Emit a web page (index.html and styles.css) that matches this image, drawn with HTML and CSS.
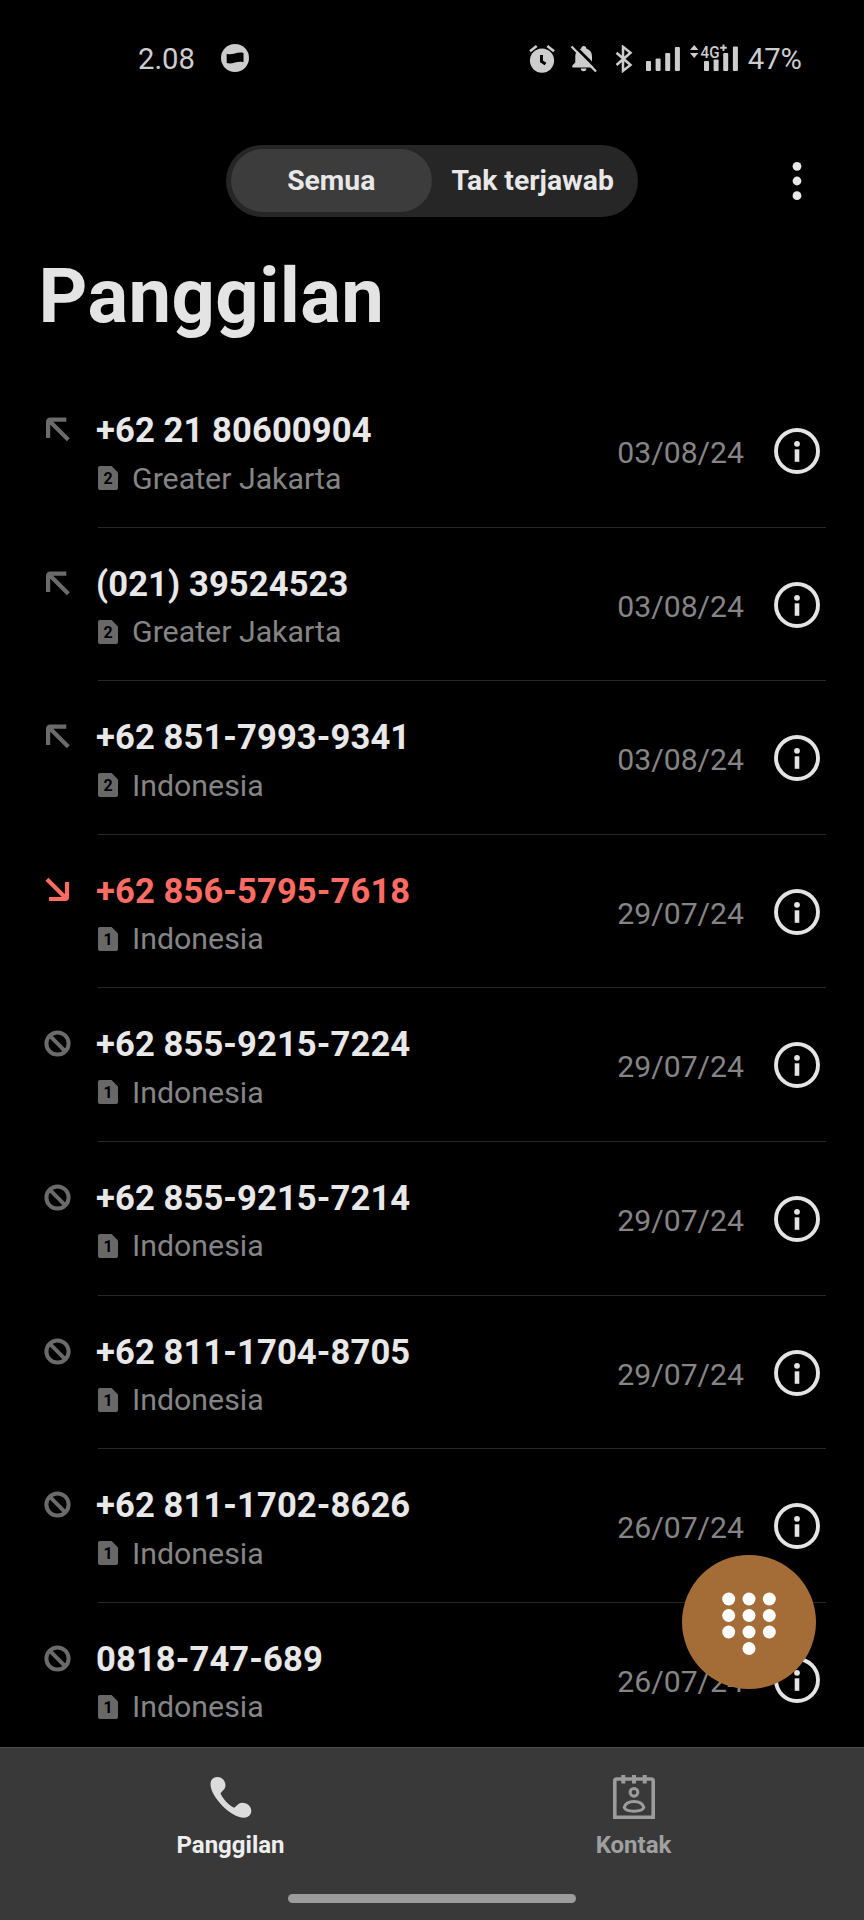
FILE: index.html
```html
<!DOCTYPE html>
<html lang="id">
<head>
<meta charset="utf-8">
<title>Panggilan</title>
<link rel="stylesheet" href="styles.css">
</head>
<body>
<svg class="defs" aria-hidden="true">
  <symbol id="out" viewBox="0 0 28 28"><path d="M4.100 22V5.600a2 2 0 0 1 2-2H22.300M4.500 4L24.300 23.800" fill="none" stroke="currentColor" stroke-width="4.200"/></symbol>
  <symbol id="missed" viewBox="0 0 28 28"><path d="M3 2.200L22 21.200M23 5v15a2 2 0 0 1-2 2H5" fill="none" stroke="currentColor" stroke-width="4.200"/></symbol>
  <symbol id="blocked" viewBox="0 0 28 28"><circle cx="13.500" cy="13.500" r="11.100" fill="none" stroke="currentColor" stroke-width="4"/><path d="M5.700 5.700l15.600 15.600" stroke="currentColor" stroke-width="3.900"/></symbol>
  <symbol id="sim" viewBox="0 0 20 24"><path d="M2 0h11.600L20 6.400V22a2 2 0 0 1-2 2H2a2 2 0 0 1-2-2V2a2 2 0 0 1 2-2z" fill="currentColor"/></symbol>
  <symbol id="info" viewBox="0 0 46 46"><circle cx="23" cy="23" r="21" fill="none" stroke="currentColor" stroke-width="3.900"/><circle cx="23" cy="15.800" r="2.900" fill="currentColor"/><path d="M20.700 21.300h4.600v12.500h-4.600z" fill="currentColor"/></symbol>
</svg>
<div class="phone">
  <header class="status">
    <div class="clock">2.08</div>
    <svg class="notice" width="28" height="28" viewBox="0 0 28 28"><circle cx="14" cy="14" r="14" fill="#cdcdcd"/><path d="M5.700 9.800c5.500 2 10-2.500 16.800-.9v9.300c-6.600-1.600-11 2.800-16.800.9z" fill="#000"/></svg>
    <div class="indicators">
      <svg width="26" height="28" viewBox="0 0 26 28"><circle cx="13" cy="15.600" r="12.100" fill="#cdcdcd"/><path d="M1 6.300L7.700 1M25 6.300L18.300 1" stroke="#cdcdcd" stroke-width="2.600"/><path d="M12.500 10v6.400l4 2.700" fill="none" stroke="#000" stroke-width="3"/></svg>
      <svg class="bell" width="28" height="28" viewBox="0 0 28 28"><path d="M11.300 3.500a2.500 2.500 0 0 1 5 0c3.800 1.200 5.700 4.200 5.700 8v6l3 3v2H2.300v-2l3-3v-6c0-3.800 2.200-6.800 6-8zM10.800 23.500h5.600a2.800 2.800 0 0 1-5.600 0z" fill="#cdcdcd"/><path d="M3.500 0L28 24.500" stroke="#000" stroke-width="3"/><path d="M1.500 1.500L26 26.500" stroke="#cdcdcd" stroke-width="2.300"/></svg>
      <svg class="bt" width="18" height="28" viewBox="0 0 18 28"><path d="M1.500 7.700L15.500 20 8 25.800V1.800L15.500 7.700 1.500 20" fill="none" stroke="#cdcdcd" stroke-width="2.500"/></svg>
      <svg class="bars" width="35" height="28" viewBox="0 0 35 28"><g fill="#cdcdcd"><rect y="16" width="5" height="10" rx="1"/><rect x="9.600" y="13.500" width="5" height="12.500" rx="1"/><rect x="19.200" y="8" width="5" height="18" rx="1"/><rect x="28.900" y="2" width="5" height="24" rx="1"/></g></svg>
      <svg class="data" width="50" height="38" viewBox="0 -4 50 38"><g fill="#cdcdcd"><path d="M0 6L4.200 1l4.200 5zM0 9l4.200 5 4.200-5z"/><rect x="14" y="17" width="5" height="10" rx="1"/><rect x="23.600" y="15.500" width="5" height="11.500" rx="1"/><rect x="33.200" y="9" width="5" height="18" rx="1"/><rect x="42.900" y="2.500" width="5" height="24.500" rx="1"/><text x="10.500" y="13.800" class="net" textLength="19" lengthAdjust="spacingAndGlyphs">4G</text><path d="M30.200 3.800h6.600M33.500 .5v6.600" stroke="#cdcdcd" stroke-width="1.900"/></g></svg>
      <div class="battery">47%</div>
    </div>
  </header>
  <div class="toolbar">
    <div class="tabs"><div class="tab active">Semua</div><div class="tab">Tak terjawab</div></div>
    <svg class="more" width="10" height="40" viewBox="0 0 10 40"><g fill="#e8e8e8"><circle cx="5" cy="5.300" r="4.400"/><circle cx="5" cy="20" r="4.400"/><circle cx="5" cy="34.700" r="4.400"/></g></svg>
  </div>
  <h1 class="title">Panggilan</h1>
  <main class="calls">
    <div class="call"><svg class="kind"><use href="#out"/></svg><div class="body"><div class="who"><div class="number">+62 21 80600904</div><div class="place"><span class="sim"><svg><use href="#sim"/></svg><b>2</b></span>Greater Jakarta</div></div><div class="date">03/08/24</div><svg class="info"><use href="#info"/></svg></div></div>
    <div class="call"><svg class="kind"><use href="#out"/></svg><div class="body"><div class="who"><div class="number">(021) 39524523</div><div class="place"><span class="sim"><svg><use href="#sim"/></svg><b>2</b></span>Greater Jakarta</div></div><div class="date">03/08/24</div><svg class="info"><use href="#info"/></svg></div></div>
    <div class="call"><svg class="kind"><use href="#out"/></svg><div class="body"><div class="who"><div class="number">+62 851-7993-9341</div><div class="place"><span class="sim"><svg><use href="#sim"/></svg><b>2</b></span>Indonesia</div></div><div class="date">03/08/24</div><svg class="info"><use href="#info"/></svg></div></div>
    <div class="call missed"><svg class="kind"><use href="#missed"/></svg><div class="body"><div class="who"><div class="number">+62 856-5795-7618</div><div class="place"><span class="sim"><svg><use href="#sim"/></svg><b>1</b></span>Indonesia</div></div><div class="date">29/07/24</div><svg class="info"><use href="#info"/></svg></div></div>
    <div class="call"><svg class="kind"><use href="#blocked"/></svg><div class="body"><div class="who"><div class="number">+62 855-9215-7224</div><div class="place"><span class="sim"><svg><use href="#sim"/></svg><b>1</b></span>Indonesia</div></div><div class="date">29/07/24</div><svg class="info"><use href="#info"/></svg></div></div>
    <div class="call"><svg class="kind"><use href="#blocked"/></svg><div class="body"><div class="who"><div class="number">+62 855-9215-7214</div><div class="place"><span class="sim"><svg><use href="#sim"/></svg><b>1</b></span>Indonesia</div></div><div class="date">29/07/24</div><svg class="info"><use href="#info"/></svg></div></div>
    <div class="call"><svg class="kind"><use href="#blocked"/></svg><div class="body"><div class="who"><div class="number">+62 811-1704-8705</div><div class="place"><span class="sim"><svg><use href="#sim"/></svg><b>1</b></span>Indonesia</div></div><div class="date">29/07/24</div><svg class="info"><use href="#info"/></svg></div></div>
    <div class="call"><svg class="kind"><use href="#blocked"/></svg><div class="body"><div class="who"><div class="number">+62 811-1702-8626</div><div class="place"><span class="sim"><svg><use href="#sim"/></svg><b>1</b></span>Indonesia</div></div><div class="date">26/07/24</div><svg class="info"><use href="#info"/></svg></div></div>
    <div class="call"><svg class="kind"><use href="#blocked"/></svg><div class="body"><div class="who"><div class="number">0818-747-689</div><div class="place"><span class="sim"><svg><use href="#sim"/></svg><b>1</b></span>Indonesia</div></div><div class="date">26/07/24</div><svg class="info"><use href="#info"/></svg></div></div>
  </main>
  <div class="dial">
    <svg width="54" height="64" viewBox="0 0 54 64"><g fill="#fff"><circle cx="6.700" cy="7" r="6.500"/><circle cx="27" cy="7" r="6.500"/><circle cx="47.300" cy="7" r="6.500"/><circle cx="6.700" cy="23.500" r="6.500"/><circle cx="27" cy="23.500" r="6.500"/><circle cx="47.300" cy="23.500" r="6.500"/><circle cx="6.700" cy="40" r="6.500"/><circle cx="27" cy="40" r="6.500"/><circle cx="47.300" cy="40" r="6.500"/><circle cx="27" cy="56.500" r="6.500"/></g></svg>
  </div>
  <footer class="nav">
    <div class="navitems">
      <div class="navitem on"><svg width="44" height="46" viewBox="0 0 44 46"><path d="M1.500 10C1.500 5.500 4.500 3 8.500 3c4.500 0 8 4 8 8.500 0 3.500-3.500 5.500-5 8C14 25 19 30.500 25 33.800c2.500-1 4-5 8-5 5 0 9.300 3.500 9.300 8 0 4-3 7-7.500 7C22 43.500 1.500 23 1.500 10z" fill="#dcdcdc"/></svg><span>Panggilan</span></div>
      <div class="navitem"><svg width="44" height="46" viewBox="0 0 44 46"><g fill="none" stroke="#9c9c9c" stroke-width="3.600"><path d="M2.800 43.200V7a2 2 0 0 1 2-2h34.400a2 2 0 0 1 2 2v36.200z"/><path d="M11.300 1v8.500M22 1v8.500M32.700 1v8.500" stroke-width="4"/><circle cx="22" cy="18.300" r="3.900" stroke-width="3"/><path d="M12.200 33.500c1.300-4.500 5.500-6 9.800-6s8.500 1.500 9.800 6c-1 2.500-5.500 3.700-9.800 3.700s-8.800-1.200-9.800-3.700z" stroke-width="3"/></g></svg><span>Kontak</span></div>
    </div>
    <div class="home"></div>
  </footer>
</div>
</body>
</html>
```
FILE: styles.css
```css
* { box-sizing: border-box; }
body { margin: 0; background: #000; font-family: Roboto, sans-serif; }
svg { display: block; flex: none; }
.defs { position: absolute; width: 0; height: 0; }
.phone { position: relative; width: 864px; height: 1920px; overflow: hidden; display: flex; flex-direction: column; color: #e8e8e8; }

.status { height: 117px; flex: none; display: flex; align-items: center; padding: 0 62px 0 138px; color: #cdcdcd; font-size: 29.200px; line-height: 36px; }
.notice { margin-left: 26px; margin-top: -2px; }
.indicators { margin-left: auto; display: flex; align-items: center; }
.bell { margin-left: 15.500px; }
.bt { margin-left: 16.500px; }
.bars { margin-left: 13px; }
.data { margin-left: 9px; }
.net { font-size: 17px; font-weight: 500; }
.battery { margin-left: 8px; }

.toolbar { height: 128px; flex: none; display: flex; align-items: center; padding: 0 62px 1px 226px; }
.tabs { width: 412px; height: 72px; border-radius: 36px; background: #262626; padding: 4.500px; display: flex; }
.tab { flex: 1; text-align: center; font-size: 28.300px; font-weight: 700; line-height: 63px; border-radius: 32px; white-space: nowrap; }
.tab.active { background: #3c3c3c; }
.more { margin-left: auto; }

.title { margin: 0 0 0 38.500px; padding-top: 1px; font-size: 76px; font-weight: 700; letter-spacing: .4px; line-height: 100px; height: 129px; flex: none; color: #e4e4e4; }

.calls { flex: 1; min-height: 0; overflow: hidden; }
.call { height: 153.600px; display: flex; padding: 0 38.500px 0 44px; }
.kind { width: 28px; height: 28px; margin-top: 42px; color: #6b6b6b; }
.body { flex: 1; margin-left: 26px; border-bottom: 1.500px solid #262626; display: flex; align-items: flex-start; }
.number { margin-top: 35px; font-size: 34.600px; font-weight: 700; letter-spacing: .1px; line-height: 42px; margin-left: -2px; }
.place { display: flex; align-items: center; margin-top: 8.500px; font-size: 30.300px; line-height: 38px; color: #858585; }
.sim { position: relative; width: 20px; height: 24px; margin-right: 14px; margin-top: -1px; color: #686868; }
.sim svg { width: 20px; height: 24px; }
.sim b { position: absolute; inset: 0; color: #000; font-size: 16px; font-weight: 700; line-height: 25px; text-align: center; }
.date { margin-left: auto; margin-top: 60px; font-size: 30.200px; line-height: 38px; color: #858585; }
.info { width: 46px; height: 46px; margin: 54px 5.500px 0 30px; color: #e4e4e4; }
.missed .kind, .missed .number { color: #ff6c63; }

.dial { position: absolute; left: 682px; top: 1555px; width: 134px; height: 134px; border-radius: 50%; background: #a46d37; display: flex; justify-content: center; padding-top: 36.500px; }

.nav { height: 173px; flex: none; background: #393939; border-top: 1.500px solid #4c4c4c; }
.navitems { display: flex; padding: 26px 29px 0; }
.navitem { flex: 1; display: flex; flex-direction: column; align-items: center; color: #a0a0a0; font-size: 24px; font-weight: 700; line-height: 30px; gap: 10px; }
.navitem.on { color: #eee; }
.home { width: 288px; height: 9px; border-radius: 5px; background: #9c9c9c; margin: 34px auto 0; }
```
